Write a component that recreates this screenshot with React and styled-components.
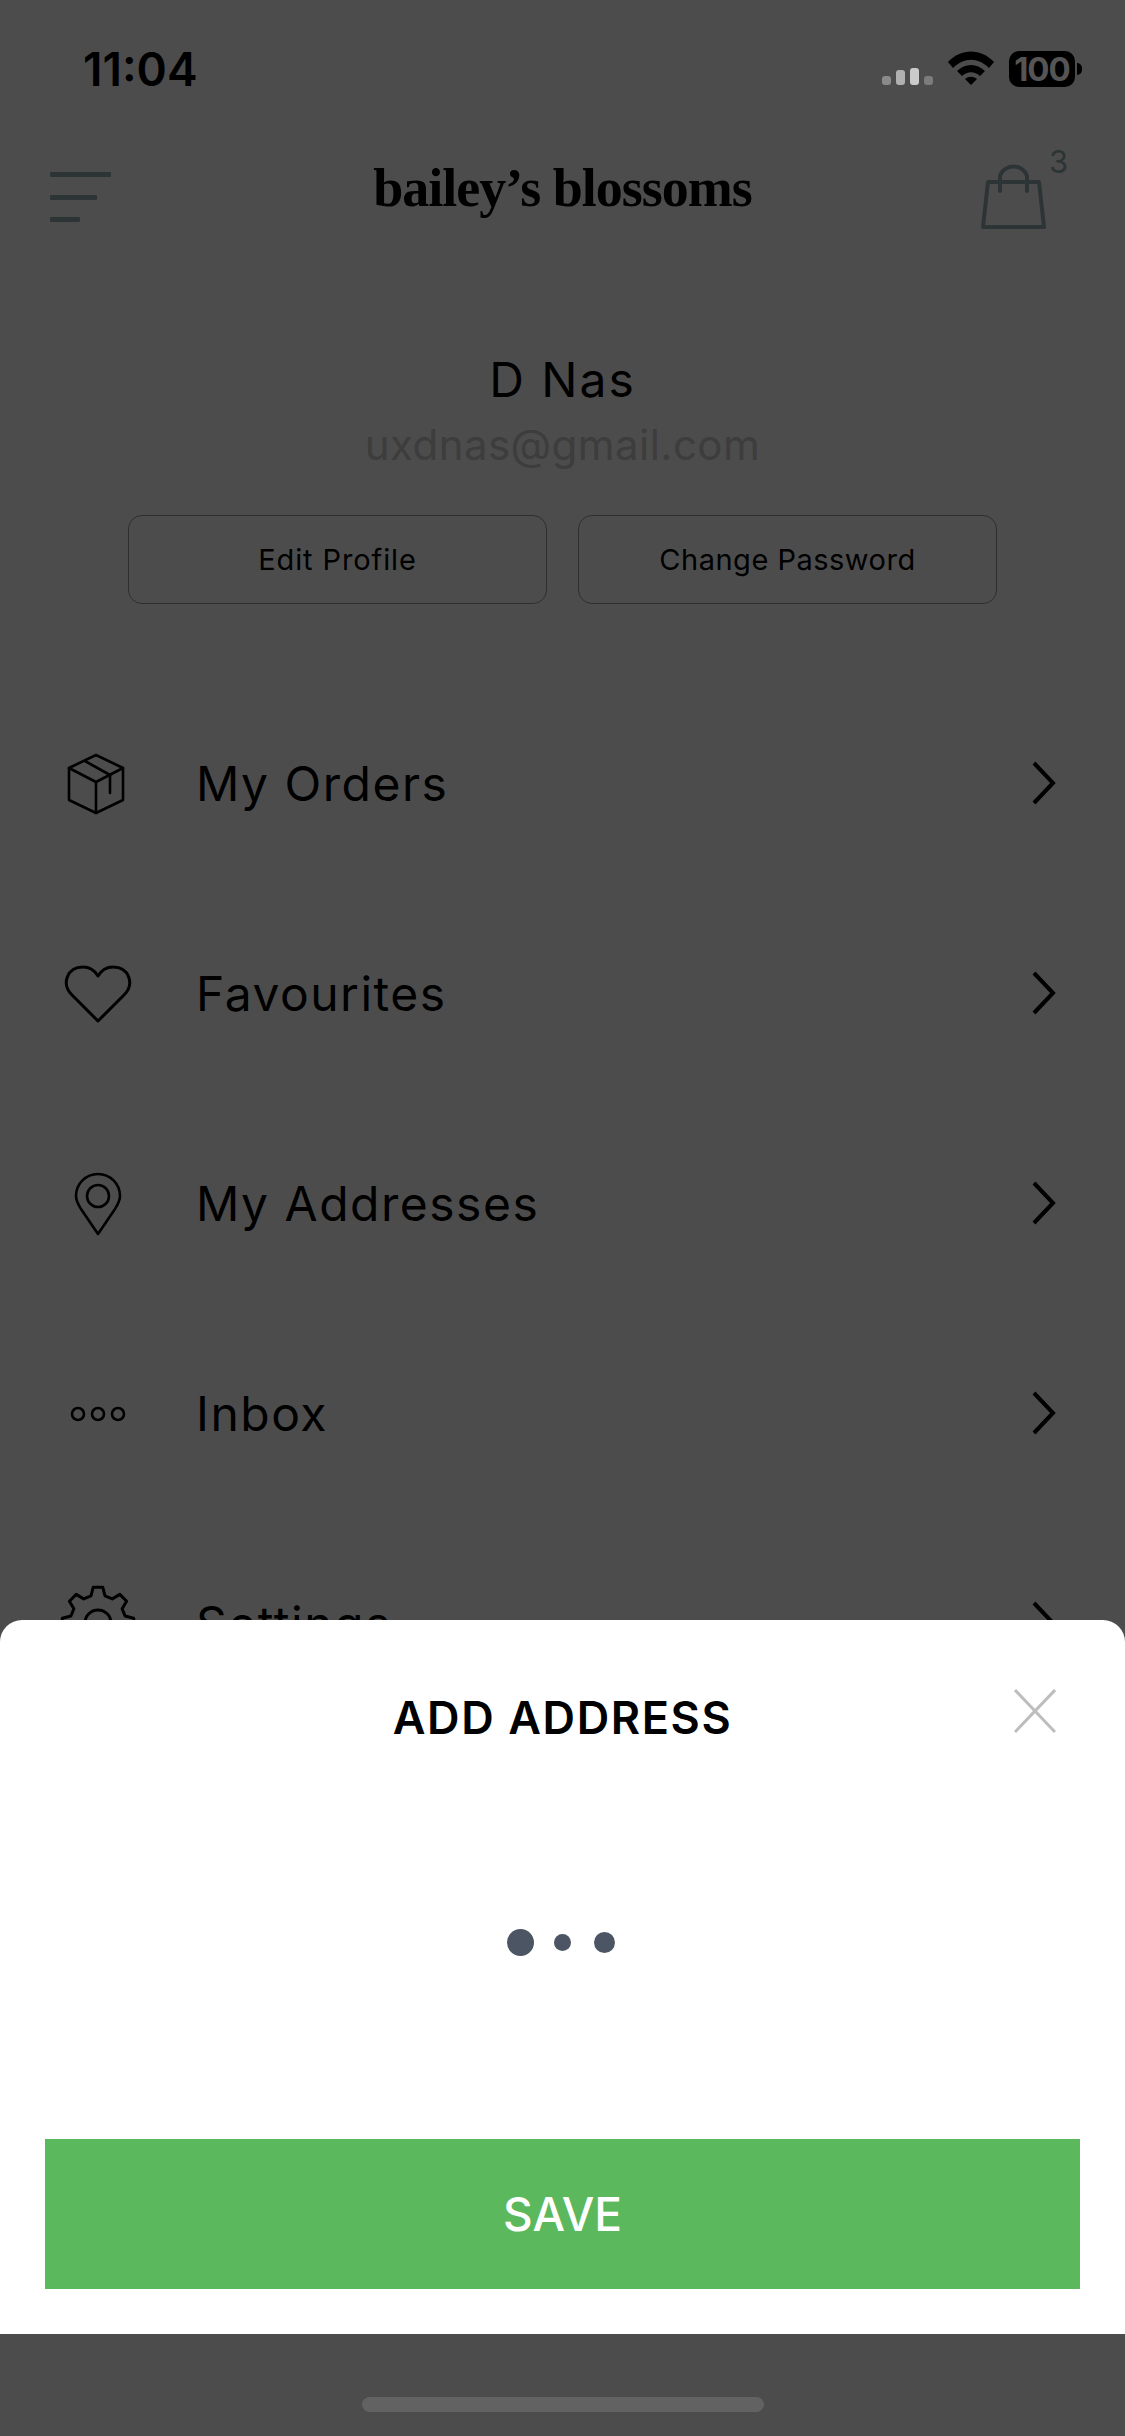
import styled, { createGlobalStyle } from 'styled-components';

const GlobalStyle = createGlobalStyle`
  html, body {
    margin: 0;
    padding: 0;
    background: #fff;
    font-family: Inter, "Open Sans", sans-serif;
  }
  * { box-sizing: border-box; }
`;

const Page = styled.div`
  position: relative;
  width: 1125px;
  height: 2436px;
  overflow: hidden;
  background: #fff;
  color: #000;
`;

const StatusBar = styled.div`
  position: relative;
  z-index: 2;
  height: 130px;
  padding: 51px 43px 0 83px;
  display: flex;
  justify-content: space-between;
  align-items: flex-start;
`;

const Time = styled.div`
  font-size: 46px;
  line-height: 36px;
  font-weight: 600;
  color: #000;
`;

const StatusIcons = styled.div`
  display: flex;
  align-items: flex-start;
`;

const Signal = styled.div`
  display: flex;
  align-items: flex-end;
  gap: 5px;
  height: 34px;
  margin-right: 15px;
`;

const SignalBar = styled.span`
  width: 9px;
  height: ${props => props.$h}px;
  border-radius: 3px;
  background: ${props => props.$color};
`;

const Battery = styled.div`
  margin-left: 15px;
  width: 66px;
  height: 36px;
  border-radius: 10px;
  background: #000;
  color: #555;
  font-size: 33px;
  line-height: 36px;
  font-weight: 700;
  text-align: center;
  letter-spacing: -1px;
`;

const BatteryNub = styled.span`
  width: 5px;
  height: 12px;
  margin: 12px 0 0 2px;
  border-radius: 0 6px 6px 0;
  background: #000;
`;

const Header = styled.header`
  height: 120px;
  padding: 0 50px;
  display: grid;
  grid-template-columns: 1fr auto 1fr;
  align-items: center;
`;

const Burger = styled.div`
  margin-top: 14px;
  display: flex;
  flex-direction: column;
  gap: 17.5px;
`;

const BurgerBar = styled.span`
  display: block;
  width: ${props => props.$w}px;
  height: 5px;
  border-radius: 1px;
  background: #98b0b2;
`;

const Logo = styled.div`
  font-family: "Liberation Serif", serif;
  font-size: 54px;
  font-weight: 700;
  letter-spacing: -1px;
  line-height: 60px;
  margin-top: -4px;
  color: #000;
`;

const BagWrap = styled.div`
  position: relative;
  justify-self: end;
  margin-right: 28px;
  width: 66px;
  height: 70px;
  margin-top: 12px;
`;

const BagCount = styled.span`
  position: absolute;
  left: 68px;
  top: -17px;
  font-size: 31px;
  line-height: 36px;
  color: #98b0b2;
`;

const Profile = styled.section`
  padding-top: 102px;
  display: flex;
  flex-direction: column;
  align-items: center;
`;

const Name = styled.div`
  font-size: 48px;
  line-height: 56px;
  letter-spacing: 2px;
  color: #000;
`;

const Email = styled.div`
  margin-top: 9px;
  font-size: 42px;
  line-height: 56px;
  letter-spacing: 0.45px;
  color: #cbcbcb;
`;

const ButtonRow = styled.div`
  margin-top: 42px;
  display: flex;
  gap: 31px;
`;

const OutlineButton = styled.div`
  width: 419px;
  height: 89px;
  border: 1.5px solid #9a9a9a;
  border-radius: 14px;
  display: flex;
  align-items: center;
  justify-content: center;
  font-size: 29px;
  color: #000;
  letter-spacing: ${props => props.$spacing}px;
`;

const Menu = styled.nav`
  margin-top: 74px;
  display: flex;
  flex-direction: column;
`;

const MenuRow = styled.div`
  height: 210px;
  padding: 0 68px 0 57px;
  display: flex;
  align-items: center;
`;

const MenuIcon = styled.svg`
  width: 80px;
  height: 80px;
  flex: none;
  fill: none;
  stroke: #000;
  stroke-width: 2.6;
  stroke-linejoin: round;
  stroke-linecap: round;
`;

const MenuLabel = styled.span`
  margin-left: 59px;
  font-size: 48px;
  letter-spacing: 1.5px;
  color: #000;
`;

const Chevron = styled.svg`
  margin-left: auto;
  width: 26px;
  height: 46px;
  fill: none;
  stroke: #000;
  stroke-width: 4;
`;

const Overlay = styled.div`
  position: absolute;
  inset: 0;
  z-index: 1;
  background: rgba(0, 0, 0, 0.7);
  display: flex;
  flex-direction: column;
  justify-content: flex-end;
`;

const Sheet = styled.section`
  height: 714px;
  padding: 0 45px;
  background: #fff;
  border-radius: 22px 22px 0 0;
  display: flex;
  flex-direction: column;
`;

const SheetHeader = styled.div`
  position: relative;
  padding-top: 71px;
  text-align: center;
`;

const SheetTitle = styled.h2`
  margin: 0;
  font-size: 45px;
  line-height: 54px;
  font-weight: 600;
  letter-spacing: 1.6px;
  color: #000;
`;

const CloseIcon = styled.svg`
  position: absolute;
  right: 24px;
  top: 69px;
  width: 42px;
  height: 44px;
  stroke: #bdbdbd;
  stroke-width: 3;
`;

const Loader = styled.div`
  flex: 1;
  padding-right: 4px;
  display: flex;
  align-items: center;
  justify-content: center;
  gap: 20px;
`;

const LoaderDot = styled.span`
  width: ${props => props.$size}px;
  height: ${props => props.$size}px;
  margin-left: ${props => props.$offset || 0}px;
  border-radius: 50%;
  background: #4b5563;
`;

const SaveButton = styled.div`
  height: 150px;
  margin-bottom: 45px;
  background: #5cb85c;
  color: #fff;
  font-size: 46px;
  font-weight: 500;
  display: flex;
  align-items: center;
  justify-content: center;
`;

const HomeArea = styled.div`
  height: 102px;
  padding-top: 63px;
  display: flex;
  justify-content: center;
`;

const HomeIndicator = styled.span`
  width: 402px;
  height: 15px;
  border-radius: 8px;
  background: #626262;
`;

// cog outline, only its top shows above the sheet
const gearPath = () => {
  const cx = 41;
  const cy = 40;
  const teeth = 8;
  const pts = [];
  for (let i = 0; i < teeth; i++) {
    const a = (i * 2 * Math.PI) / teeth - Math.PI / 2;
    const step = (2 * Math.PI) / teeth;
    [[-0.32, 28], [-0.17, 36], [0.17, 36], [0.32, 28]].forEach(([f, r]) => {
      const t = a + f * step;
      pts.push(`${(cx + r * Math.cos(t)).toFixed(1)} ${(cy + r * Math.sin(t)).toFixed(1)}`);
    });
  }
  return `M${pts.join(' L')} Z`;
};

const icons = {
  box: (
    <>
      <path d="M39 12 L66 25 V57 L39 70 L12 57 V25 Z" />
      <path d="M12 25 L39 39 L66 25 M39 39 V70" />
      <path d="M28 18 L53 32 V50" />
    </>
  ),
  heart: (
    <path
      strokeWidth="3"
      d="M41 68 L15 42 C4 31 10 14 26 14 C33 14 38 18 41 23 C44 18 49 14 56 14 C72 14 78 31 67 42 Z"
    />
  ),
  pin: (
    <>
      <path d="M41 71 L24 46 C21 41 19 38 19 33 A22 22 0 0 1 63 33 C63 38 61 41 58 46 Z" />
      <circle cx="41" cy="33" r="11" />
    </>
  ),
  dots: (
    <>
      <circle cx="21" cy="41" r="6" />
      <circle cx="41" cy="41" r="6" />
      <circle cx="61" cy="41" r="6" />
    </>
  ),
  gear: (
    <>
      <path strokeWidth="3" d={gearPath()} />
      <circle cx="41" cy="40" r="13" strokeWidth="3" />
    </>
  ),
};

const menuItems = [
  { label: 'My Orders', icon: 'box' },
  { label: 'Favourites', icon: 'heart' },
  { label: 'My Addresses', icon: 'pin' },
  { label: 'Inbox', icon: 'dots' },
  { label: 'Settings', icon: 'gear' },
];

function App() {
  return (
    <Page>
      <GlobalStyle />
      <StatusBar>
        <Time>11:04</Time>
        <StatusIcons>
          <Signal>
            <SignalBar $h={9} $color="#8a8a8a" />
            <SignalBar $h={15} $color="#b0b0b0" />
            <SignalBar $h={17} $color="#cacaca" />
            <SignalBar $h={9} $color="#7c7c7c" />
          </Signal>
          <svg width="46" height="34" viewBox="0 0 46 34" fill="#000">
            <path d="M0 11 C13 -3 33 -3 46 11 L41 17 C30 6 16 6 5 17 Z" />
            <path d="M9 20 C17 12 29 12 37 20 L32 25 C26 20 20 20 14 25 Z" />
            <path d="M17 28 C21 25 25 25 29 28 L23 34 Z" />
          </svg>
          <Battery>100</Battery>
          <BatteryNub />
        </StatusIcons>
      </StatusBar>

      <Header>
        <Burger>
          <BurgerBar $w={61} />
          <BurgerBar $w={47} />
          <BurgerBar $w={30} />
        </Burger>
        <Logo>bailey’s blossoms</Logo>
        <BagWrap>
          <svg width="66" height="70" viewBox="0 0 66 70" fill="none" stroke="#98b0b2" strokeWidth="4" strokeLinejoin="round" strokeLinecap="round">
            <path d="M7 21 H58 L63 66 H2 Z" />
            <path d="M19 30 V15 A14 13 0 0 1 46 15 V30" />
          </svg>
          <BagCount>3</BagCount>
        </BagWrap>
      </Header>

      <Profile>
        <Name>D Nas</Name>
        <Email>uxdnas@gmail.com</Email>
        <ButtonRow>
          <OutlineButton $spacing={0.9}>Edit Profile</OutlineButton>
          <OutlineButton $spacing={0.5}>Change Password</OutlineButton>
        </ButtonRow>
      </Profile>

      <Menu>
        {menuItems.map(item => (
          <MenuRow key={item.label}>
            <MenuIcon viewBox="0 0 80 80">{icons[item.icon]}</MenuIcon>
            <MenuLabel>{item.label}</MenuLabel>
            <Chevron viewBox="0 0 26 46">
              <path d="M3 3 L22 23 L3 43" />
            </Chevron>
          </MenuRow>
        ))}
      </Menu>

      <Overlay>
        <Sheet>
          <SheetHeader>
            <SheetTitle>ADD ADDRESS</SheetTitle>
            <CloseIcon viewBox="0 0 42 44">
              <path d="M1 1 L41 43 M41 1 L1 43" />
            </CloseIcon>
          </SheetHeader>
          <Loader>
            <LoaderDot $size={27} />
            <LoaderDot $size={17} />
            <LoaderDot $size={21} $offset={3} />
          </Loader>
          <SaveButton>SAVE</SaveButton>
        </Sheet>
        <HomeArea>
          <HomeIndicator />
        </HomeArea>
      </Overlay>
    </Page>
  );
}

export default App;
